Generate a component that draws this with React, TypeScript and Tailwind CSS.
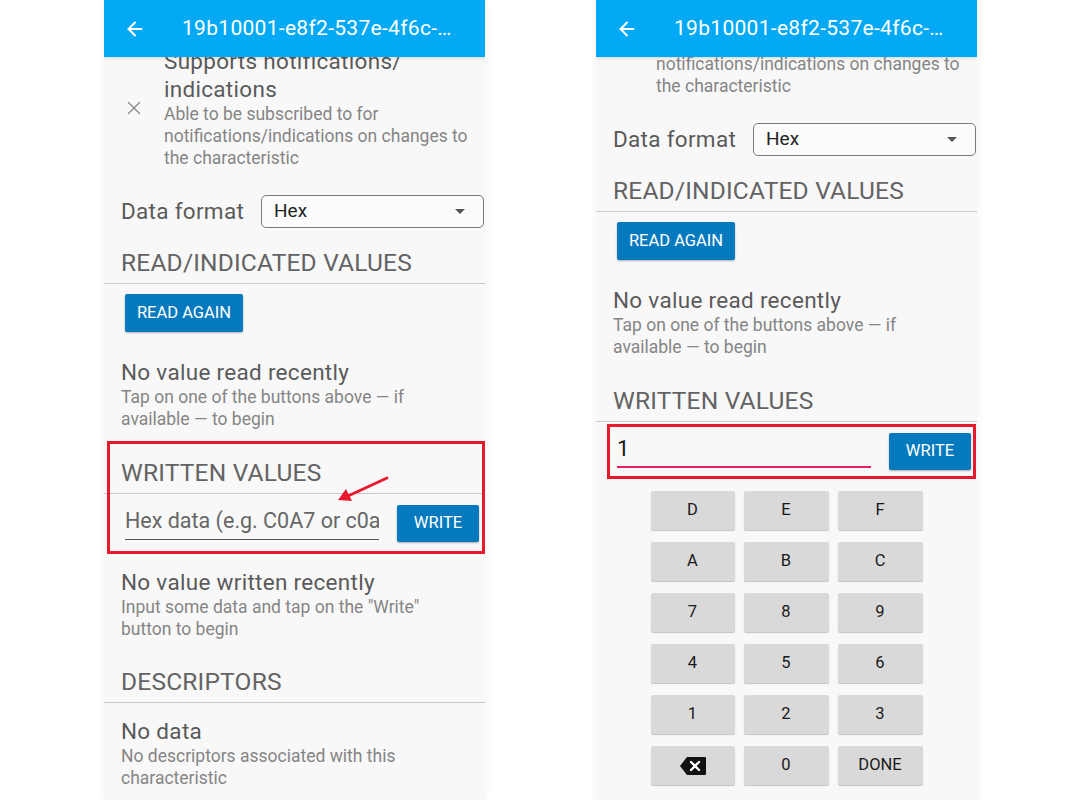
import { ArrowLeft, X } from 'lucide-react';

const KEYS = ['D', 'E', 'F', 'A', 'B', 'C', '7', '8', '9', '4', '5', '6', '1', '2', '3', 'DEL', '0', 'DONE'];

function TopBar() {
  return (
    <div className="relative z-10 flex h-[57px] shrink-0 items-center bg-[#03a9f4] pl-[20px] shadow-[0_1px_3px_rgba(0,0,0,0.15)]">
      <ArrowLeft className="h-[22px] w-[22px] text-white" strokeWidth={2.2} />
      <span className="ml-[36px] text-[21px] tracking-[0.3px] text-white">19b10001-e8f2-537e-4f6c-…</span>
    </div>
  );
}

function SectionHeader({ title, className }: { title: string; className: string }) {
  return (
    <div className={`${className} border-b border-[#c9c9c9] px-[17px] pb-[6px]`}>
      <h2 className="text-[24.5px] leading-[28px] tracking-[0.2px] text-[#636363]">{title}</h2>
    </div>
  );
}

function EmptyNote({ title, lines, className }: { title: string; lines: string[]; className: string }) {
  return (
    <div className={`${className} px-[17px]`}>
      <p className="text-[22.5px] leading-[28px] tracking-[0.3px] text-[#5a5a5a]">{title}</p>
      {lines.map((line) => (
        <p key={line} className="text-[17.5px] leading-[22px] text-[#858585]">
          {line}
        </p>
      ))}
    </div>
  );
}

function BlueButton({ label, className }: { label: string; className: string }) {
  return (
    <button
      type="button"
      className={`${className} flex items-center justify-center rounded-[2px] bg-[#0579bd] text-[16.5px] text-white shadow-[0_1px_2px_rgba(0,0,0,0.3)]`}
    >
      {label}
    </button>
  );
}

function BackspaceIcon() {
  return (
    <svg width="28" height="20" viewBox="0 0 28 20">
      <path d="M8 1h18a1 1 0 0 1 1 1v16a1 1 0 0 1-1 1H8L1 10z" fill="#111" />
      <path d="M12 6l8 8M20 6l-8 8" stroke="#fff" strokeWidth="2.4" strokeLinecap="round" />
    </svg>
  );
}

function Keypad() {
  return (
    <div className="mt-[21px] flex justify-center">
      <div className="grid grid-cols-[84px_85px_85px] gap-x-[9px] gap-y-[12px]">
        {KEYS.map((key) => (
          <div
            key={key}
            className="flex h-[39px] items-center justify-center rounded-[2px] bg-[#d9d9d9] text-[16.5px] text-[#1a1a1a] shadow-[0_1px_1px_rgba(0,0,0,0.22)]"
          >
            {key === 'DEL' ? <BackspaceIcon /> : key}
          </div>
        ))}
      </div>
    </div>
  );
}

function CharacteristicDetail({ offset, typed }: { offset: string; typed: boolean }) {
  return (
    <div className={`${offset} flex flex-col`}>
      {/* Property row (scrolled partly under the app bar) */}
      <div className="flex items-center">
        <div className="flex w-[60px] justify-center">
          <X className="h-[22px] w-[22px] text-[#8a8a8a]" strokeWidth={1.5} />
        </div>
        <div>
          <p className="text-[22.5px] leading-[28px] tracking-[0.3px] text-[#5a5a5a]">
            Supports notifications/
            <br />
            indications
          </p>
          <p className="text-[17.5px] leading-[22px] text-[#858585]">
            Able to be subscribed to for
            <br />
            notifications/indications on changes to
            <br />
            the characteristic
          </p>
        </div>
      </div>

      {/* Data format */}
      <div className="mt-[26px] flex h-[33px] items-center pl-[17px]">
        <span className="text-[22.5px] tracking-[0.3px] text-[#5a5a5a]">Data format</span>
        <div className="ml-auto mr-[1px] flex h-[33px] w-[223px] items-center justify-between rounded-[5px] border border-[#7a7a7a] bg-[#fbfbfb] pl-[12px] pr-[18px]">
          <span className="text-[19px] text-[#222]">Hex</span>
          <span className="h-0 w-0 border-x-[5px] border-t-[5px] border-x-transparent border-t-[#555]" />
        </div>
      </div>

      <SectionHeader title="READ/INDICATED VALUES" className="mt-[21px]" />
      <div className="mt-[10px] pl-[21px]">
        <BlueButton label="READ AGAIN" className="h-[38px] w-[118px]" />
      </div>
      <EmptyNote
        className="mt-[26px]"
        title="No value read recently"
        lines={['Tap on one of the buttons above — if', 'available — to begin']}
      />

      <SectionHeader title="WRITTEN VALUES" className="mt-[29px]" />
      <div className="mt-[11px] flex items-start pl-[21px]">
        {typed ? (
          <div className="flex h-[35px] w-[254px] items-center border-b-2 border-[#e91e63] pb-[2px]">
            <span className="text-[22px] text-[#1a1a1a]">1</span>
          </div>
        ) : (
          <div className="flex h-[35px] w-[254px] items-center overflow-hidden whitespace-nowrap border-b border-[#555] pb-[2px]">
            <span className="text-[21.5px] text-[#666]">Hex data (e.g. C0A7 or c0a7)</span>
          </div>
        )}
        <BlueButton label="WRITE" className="ml-[18px] h-[37px] w-[82px]" />
      </div>

      {typed ? (
        <Keypad />
      ) : (
        <>
          <EmptyNote
            className="mt-[26px]"
            title="No value written recently"
            lines={['Input some data and tap on the "Write"', 'button to begin']}
          />
          <SectionHeader title="DESCRIPTORS" className="mt-[28px]" />
          <EmptyNote
            className="mt-[14px]"
            title="No data"
            lines={['No descriptors associated with this', 'characteristic']}
          />
        </>
      )}
    </div>
  );
}

export default function App() {
  return (
    <div className="flex h-[800px] w-[1080px] justify-between overflow-hidden bg-white pl-[104px] pr-[103px] font-['Roboto','Liberation_Sans',sans-serif]">
      {/* Before: empty write field */}
      <div className="relative flex h-[800px] w-[381px] flex-col overflow-hidden bg-[#f8f8f8] shadow-[0_0_8px_rgba(0,0,0,0.06)]">
        <TopBar />
        <CharacteristicDetail offset="-mt-[10px]" typed={false} />
        {/* annotation */}
        <div className="absolute left-[3px] top-[441px] h-[113px] w-[378px] border-[3px] border-[#e8192c]" />
        <svg className="absolute left-[228px] top-[470px]" width="62" height="36" viewBox="0 0 62 36">
          <line x1="55" y1="8" x2="16" y2="26" stroke="#e8192c" strokeWidth="3" strokeLinecap="round" />
          <polygon points="6,30 14,19 20,31" fill="#e8192c" />
        </svg>
      </div>

      {/* After: value typed, hex keypad open */}
      <div className="relative flex h-[800px] w-[381px] flex-col overflow-hidden bg-[#f8f8f8] shadow-[0_0_8px_rgba(0,0,0,0.06)]">
        <TopBar />
        <CharacteristicDetail offset="-mt-[82px]" typed />
        <div className="absolute left-[11px] top-[424px] h-[55px] w-[369px] border-[3px] border-[#e8192c]" />
      </div>
    </div>
  );
}
